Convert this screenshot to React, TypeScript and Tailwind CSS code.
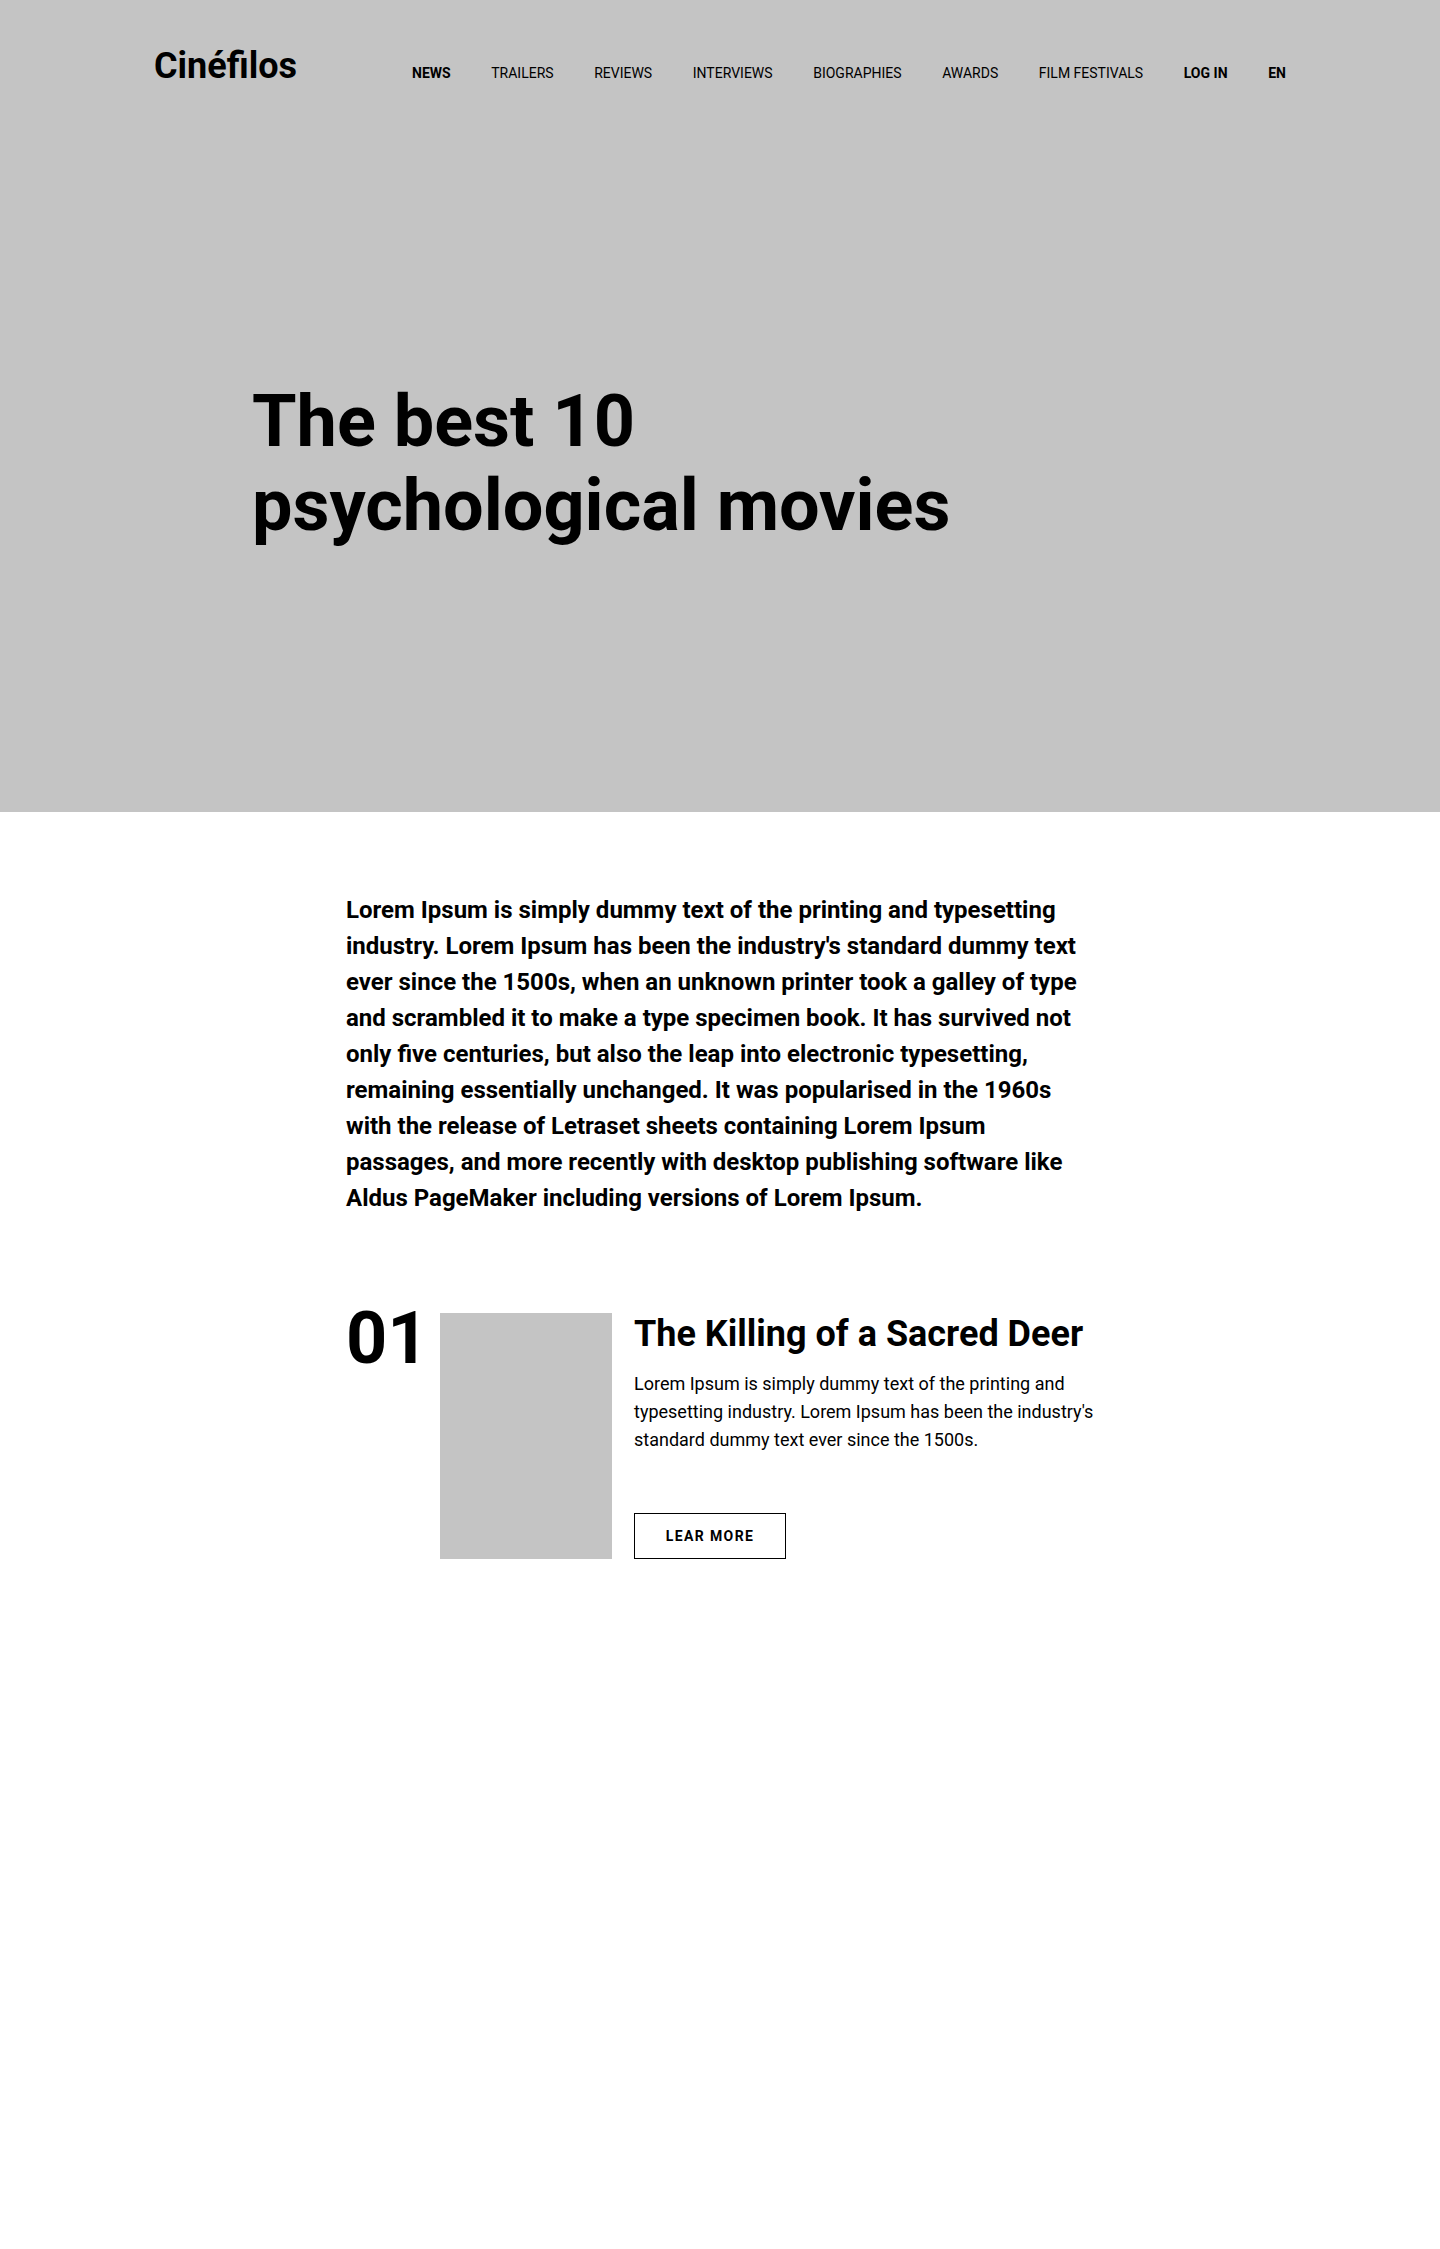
const links = [
  { label: 'News', bold: true },
  { label: 'Trailers' },
  { label: 'Reviews' },
  { label: 'Interviews' },
  { label: 'Biographies' },
  { label: 'Awards' },
  { label: 'Film festivals' },
  { label: 'Log in', bold: true },
  { label: 'En', bold: true },
];

export default function App() {
  return (
    <div className="min-h-screen bg-white font-['Roboto',sans-serif] text-black">
      <header className="bg-[#c4c4c4] px-6 pb-[264px]">
        <div className="mx-auto flex max-w-[1132px] items-baseline justify-between pt-[45px]">
          <a href="#" className="text-4xl leading-[42px] font-bold">Cinéfilos</a>
          <nav aria-label="Main" className="flex w-full max-w-[874px] justify-between text-sm">
            {links.map((l) => (
              <a key={l.label} href="#" className={l.bold ? 'font-bold uppercase' : 'uppercase'}>
                {l.label}
              </a>
            ))}
          </nav>
        </div>
        <div className="mx-auto mt-[293px] max-w-[936px]">
          <h1 className="max-w-[740px] text-7xl leading-[84px] font-bold">The best 10 psychological movies</h1>
        </div>
      </header>
      <main className="mx-auto max-w-[748px] pt-20">
        <p className="text-2xl leading-9 font-bold">
          Lorem Ipsum is simply dummy text of the printing and typesetting industry. Lorem Ipsum has been the
          industry's standard dummy text ever since the 1500s, when an unknown printer took a galley of type and
          scrambled it to make a type specimen book. It has survived not only five centuries, but also the leap into
          electronic typesetting, remaining essentially unchanged. It was popularised in the 1960s with the release of
          Letraset sheets containing Lorem Ipsum passages, and more recently with desktop publishing software like
          Aldus PageMaker including versions of Lorem Ipsum.
        </p>
        <article className="mt-[97px] flex">
          <span className="w-[94px] shrink-0 text-7xl leading-[52px] font-bold">01</span>
          <div className="h-[246px] w-[172px] shrink-0 bg-[#c4c4c4]" />
          <div className="ml-[22px] flex flex-1 flex-col items-start">
            <h2 className="text-4xl leading-[42px] font-bold">The Killing of a Sacred Deer</h2>
            <p className="mt-[15px] text-lg leading-7">
              Lorem Ipsum is simply dummy text of the printing and typesetting industry. Lorem Ipsum has been the
              industry's standard dummy text ever since the 1500s.
            </p>
            <button type="button" className="mt-auto h-[46px] w-[152px] border border-black text-sm font-bold tracking-widest">
              LEAR MORE
            </button>
          </div>
        </article>
      </main>
    </div>
  );
}
